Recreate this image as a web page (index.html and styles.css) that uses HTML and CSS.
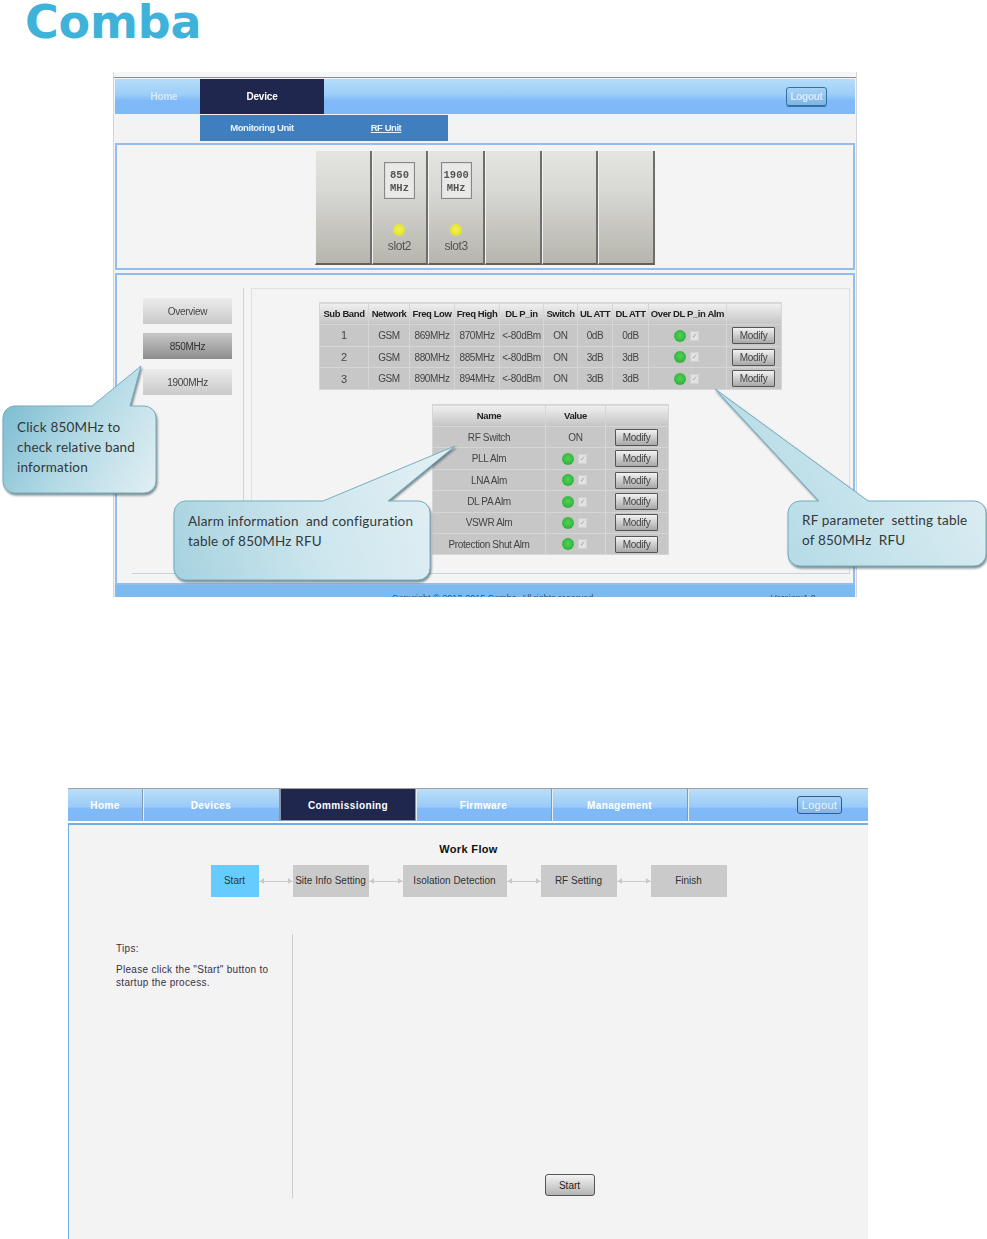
FILE: index.html
```html
<!DOCTYPE html>
<html lang="en">
  <head>
    <meta charset="utf-8" />
    <title>Comba commissioning guide</title>
    <link rel="stylesheet" href="styles.css">
  </head>
  <body>
    <header class="logo-row">
      <span class="logo">Comba</span>
    </header>

    <!-- figure 1: device page with callouts -->
    <section class="figure-one">
      <div class="screen">
        <div class="top-strip"></div>
        <nav class="nav">
          <a class="tab tab-home">Home</a>
          <a class="tab tab-device">Device</a>
          <button type="button" class="logout logout-one">Logout</button>
        </nav>
        <div class="subnav-row">
          <div class="subnav">
            <a>Monitoring Unit</a>
            <a class="current">RF Unit</a>
          </div>
        </div>

        <div class="panel panel-slots">
          <div class="slot"></div>
          <div class="slot">
            <div class="card-label">850<br>MHz</div>
            <i class="led led-yellow"></i>
            <span class="slot-name">slot2</span>
          </div>
          <div class="slot">
            <div class="card-label">1900<br>MHz</div>
            <i class="led led-yellow"></i>
            <span class="slot-name">slot3</span>
          </div>
          <div class="slot"></div>
          <div class="slot"></div>
          <div class="slot"></div>
        </div>

        <div class="panel panel-bands">
          <div class="band-layout">
            <div class="band-list">
              <a class="band">Overview</a>
              <a class="band band-active">850MHz</a>
              <a class="band">1900MHz</a>
            </div>
            <div class="band-content">
              <table class="grid rf-table">
                <colgroup><col><col><col><col><col><col><col><col><col><col></colgroup>
                <thead>
                  <tr><th>Sub Band</th><th>Network</th><th>Freq Low</th><th>Freq High</th><th>DL P_in</th><th>Switch</th><th>UL ATT</th><th>DL ATT</th><th>Over DL P_in Alm</th><th></th></tr>
                </thead>
                <tbody>
                  <tr><td class="big">1</td><td>GSM</td><td>869MHz</td><td>870MHz</td><td>&lt;-80dBm</td><td>ON</td><td>0dB</td><td>0dB</td><td><i class="led led-green"></i><i class="tick"></i></td><td><button type="button" class="modify">Modify</button></td></tr>
                  <tr><td class="big">2</td><td>GSM</td><td>880MHz</td><td>885MHz</td><td>&lt;-80dBm</td><td>ON</td><td>3dB</td><td>3dB</td><td><i class="led led-green"></i><i class="tick"></i></td><td><button type="button" class="modify">Modify</button></td></tr>
                  <tr><td class="big">3</td><td>GSM</td><td>890MHz</td><td>894MHz</td><td>&lt;-80dBm</td><td>ON</td><td>3dB</td><td>3dB</td><td><i class="led led-green"></i><i class="tick"></i></td><td><button type="button" class="modify">Modify</button></td></tr>
                </tbody>
              </table>

              <table class="grid alarm-table">
                <colgroup><col><col><col></colgroup>
                <thead>
                  <tr><th>Name</th><th>Value</th><th></th></tr>
                </thead>
                <tbody>
                  <tr><td>RF Switch</td><td>ON</td><td><button type="button" class="modify">Modify</button></td></tr>
                  <tr><td>PLL Alm</td><td><i class="led led-green"></i><i class="tick"></i></td><td><button type="button" class="modify">Modify</button></td></tr>
                  <tr><td>LNA Alm</td><td><i class="led led-green"></i><i class="tick"></i></td><td><button type="button" class="modify">Modify</button></td></tr>
                  <tr><td>DL PA Alm</td><td><i class="led led-green"></i><i class="tick"></i></td><td><button type="button" class="modify">Modify</button></td></tr>
                  <tr><td>VSWR Alm</td><td><i class="led led-green"></i><i class="tick"></i></td><td><button type="button" class="modify">Modify</button></td></tr>
                  <tr><td>Protection Shut Alm</td><td><i class="led led-green"></i><i class="tick"></i></td><td><button type="button" class="modify">Modify</button></td></tr>
                </tbody>
              </table>
            </div>
          </div>
        </div>

        <footer class="screen-footer">
          <span class="copyright">Copyright © 2013-2015 Comba. All rights reserved.</span>
          <span class="version">Version:1.0</span>
        </footer>
      </div>

      <!-- callouts sit over the screenshot -->
      <div class="callout callout-band">
        <svg width="155" height="130" viewBox="0 0 155 130">
          <defs>
            <linearGradient id="fillBand" gradientUnits="userSpaceOnUse" x1="0" y1="41" x2="154" y2="128">
              <stop offset="0" stop-color="#7dbdd1" />
              <stop offset="0.5" stop-color="#b6dbe6" />
              <stop offset="1" stop-color="#e2eff4" />
            </linearGradient>
          </defs>
          <path fill="url(#fillBand)" stroke="#74aebf" d="M12 41H90L139 1L128 41H142A12 12 0 0 1 154 53V116A12 12 0 0 1 142 128H12A12 12 0 0 1 1 116V53A12 12 0 0 1 12 41Z" />
        </svg>
        <p>Click 850MHz to<br>check relative band<br>information</p>
      </div>

      <div class="callout callout-alarm">
        <svg width="283" height="137" viewBox="0 0 283 137">
          <defs>
            <linearGradient id="fillAlarm" gradientUnits="userSpaceOnUse" x1="0" y1="135" x2="257" y2="56">
              <stop offset="0" stop-color="#a5d2df" />
              <stop offset="0.55" stop-color="#cde6ee" />
              <stop offset="1" stop-color="#dfeef3" />
            </linearGradient>
          </defs>
          <path fill="url(#fillAlarm)" stroke="#74aebf" d="M12 56H150L282 1L215 56H245A12 12 0 0 1 257 68V123A12 12 0 0 1 245 135H12A12 12 0 0 1 1 123V68A12 12 0 0 1 12 56Z" />
        </svg>
        <p>Alarm information&nbsp; and configuration<br>table of 850MHz RFU</p>
      </div>

      <div class="callout callout-rf">
        <svg width="274" height="180" viewBox="0 0 274 180">
          <defs>
            <linearGradient id="fillRf" gradientUnits="userSpaceOnUse" x1="74" y1="178" x2="272" y2="60">
              <stop offset="0" stop-color="#b5dbe6" />
              <stop offset="1" stop-color="#e0eff4" />
            </linearGradient>
          </defs>
          <path fill="url(#fillRf)" stroke="#74aebf" d="M86 113H105L1 1L154 113H260A12 12 0 0 1 272 125V166A12 12 0 0 1 260 178H86A12 12 0 0 1 74 166V125A12 12 0 0 1 86 113Z" />
        </svg>
        <p>RF parameter&nbsp; setting table<br>of 850MHz&nbsp; RFU</p>
      </div>
    </section>

    <!-- figure 2: commissioning work flow -->
    <section class="figure-two">
      <nav class="nav nav-wide">
        <a class="tab tab-w75">Home</a>
        <a class="tab tab-w137">Devices</a>
        <a class="tab tab-w136 tab-on">Commissioning</a>
        <a class="tab tab-w136">Firmware</a>
        <a class="tab tab-w136">Management</a>
        <button type="button" class="logout logout-two">Logout</button>
      </nav>
      <div class="flow-page">
        <h2 class="flow-title">Work Flow</h2>
        <div class="flow">
          <div class="step step-start">Start</div>
          <i class="link"></i>
          <div class="step step-mid">Site Info Setting</div>
          <i class="link"></i>
          <div class="step step-wide">Isolation Detection</div>
          <i class="link"></i>
          <div class="step step-mid">RF Setting</div>
          <i class="link"></i>
          <div class="step step-mid">Finish</div>
        </div>
        <div class="flow-body">
          <aside class="tips">
            <p>Tips:</p>
            <p>Please click the "Start" button to<br>startup the process.</p>
          </aside>
          <div class="flow-action">
            <button type="button" class="start-btn">Start</button>
          </div>
        </div>
      </div>
    </section>
  </body>
</html>
```

FILE: styles.css
```css
body {
  margin: 0;
  height: 1239px;
  overflow: hidden;
  background: #fff;
  font-family: "Liberation Sans", Arial, sans-serif;
  color: #333;
}

.logo-row {
  height: 72px;
  padding-left: 25px;
  box-sizing: border-box;
}

.logo {
  display: block;
  width: 180px;
  font-family: "DejaVu Sans", sans-serif;
  font-size: 46px;
  font-weight: bold;
  line-height: 44px;
  letter-spacing: -0.2px;
  color: #3fb2da;
}

/* figure 1 */
.figure-one {
  position: relative;
  width: 744px;
  height: 525px;
  margin-left: 113px;
}

.screen {
  height: 525px;
  overflow: hidden;
  box-sizing: border-box;
  padding: 0 1px;
  background: #f3f3f3;
  border-left: 1px solid #d5d5d5;
  border-right: 1px solid #d5d5d5;
  filter: blur(0.45px);
}

.top-strip {
  height: 5px;
  margin: 0 -1px 1px;
  background: #f4f6f8;
  border-bottom: 1px solid #8d8d8d;
}

.nav {
  display: flex;
  align-items: stretch;
  height: 35px;
  background: linear-gradient(#b6dcf9, #9ccdf8 45%, #7fb9f8 62%, #7fb9f8);
}

.tab {
  display: flex;
  align-items: center;
  justify-content: center;
  box-sizing: border-box;
  font-size: 10px;
  font-weight: bold;
  letter-spacing: -0.2px;
  color: #fff;
}

.tab-home {
  width: 85px;
  padding-left: 13px;
  color: #d8e9fb;
}

.tab-device {
  width: 124px;
  background: #1f274f;
}

.logout {
  margin-left: auto;
  padding: 0;
  font-family: inherit;
  color: #eaf4fd;
  border-radius: 3px;
}

.logout-one {
  align-self: center;
  width: 41px;
  height: 19px;
  margin-right: 28px;
  font-size: 10px;
  font-weight: bold;
  letter-spacing: -0.3px;
  color: #d8eafb;
  background: linear-gradient(#a9d3f6, #7db3e6);
  border: 1px solid #35719f;
  box-shadow: 0 1px 0 #35719f;
}

.subnav-row {
  height: 29px;
  padding-top: 1px;
  box-sizing: border-box;
}

.subnav {
  display: flex;
  width: 248px;
  height: 26px;
  margin-left: 85px;
  background: #3f7fc0;
}

.subnav a {
  flex: 1;
  font-size: 9.5px;
  font-weight: bold;
  line-height: 26px;
  letter-spacing: -0.45px;
  text-align: center;
  color: #eaf2fa;
}

.subnav .current {
  text-decoration: underline;
}

.panel {
  box-sizing: border-box;
  background: #f4f4f4;
  border: 2px solid #93bdec;
}

.panel-slots {
  display: flex;
  height: 127px;
  padding: 6px 0 0 198px;
}

.slot {
  display: flex;
  flex-direction: column;
  align-items: center;
  box-sizing: border-box;
  width: 56.67px;
  height: 114px;
  padding-top: 11px;
  background: linear-gradient(#e4e4e1, #d8d8d5 35%, #b6b5ad);
  border-left: 1px solid #f2f2f2;
  border-right: 2px solid #6e6e6a;
  border-bottom: 2px solid #5f5f5b;
}

.card-label {
  box-sizing: border-box;
  width: 31px;
  height: 37px;
  padding-top: 6px;
  font-family: "Liberation Mono", monospace;
  font-size: 10.5px;
  font-weight: bold;
  line-height: 13px;
  text-align: center;
  color: #555;
  background: #e9e9e7;
  border: 1px solid #888;
  box-shadow: 0 0 0 1px #ddd inset;
}

.led {
  display: inline-block;
  width: 12px;
  height: 12px;
  border-radius: 50%;
  vertical-align: middle;
}

.led-yellow {
  margin-top: 25px;
  background: radial-gradient(circle at 50% 45%, #f2f25a, #dcdc14);
}

.led-green {
  background: radial-gradient(circle at 50% 45%, #52d05a, #22a82e);
}

.slot-name {
  margin-top: 3px;
  font-size: 12px;
  letter-spacing: -0.4px;
  color: #555;
}

.tick {
  display: inline-flex;
  align-items: center;
  justify-content: center;
  box-sizing: border-box;
  width: 9px;
  height: 10px;
  margin: 0 2px 0 4px;
  vertical-align: middle;
  background: #e2e2e2;
  border: 1px solid #d2d2d2;
}

.tick::after {
  content: "✓";
  font-family: "DejaVu Sans", sans-serif;
  font-size: 7px;
  line-height: 8px;
  color: #a8a8a8;
}

.panel-bands {
  height: 312px;
  margin-top: 3px;
  padding-top: 13px;
}

.band-layout {
  display: flex;
  height: 285px;
  margin: 0 3px 0 15px;
  border-bottom: 1px solid #c6d2dd;
}

.band-list {
  display: flex;
  flex-direction: column;
  gap: 9px;
  width: 112px;
  box-sizing: border-box;
  padding: 10px 0 0 11px;
  border-right: 1px solid #c5d6e8;
}

.band {
  width: 89px;
  height: 26px;
  font-size: 10px;
  line-height: 27px;
  letter-spacing: -0.3px;
  text-align: center;
  color: #444;
  background: linear-gradient(#ececec, #c9c9c9);
}

.band-active {
  margin-bottom: 1px;
  background: linear-gradient(#c8c8c8, #8d8d8d);
  color: #333;
}

.band-content {
  flex: 1;
  margin-left: 7px;
  padding-top: 13px;
  border: 1px solid #e0e0e0;
  border-bottom: 0;
}

.grid {
  table-layout: fixed;
  border-collapse: collapse;
  background: #c7c7c7;
  font-size: 10px;
  text-align: center;
  color: #444;
  border: 1px solid #d2d2d2;
}

.grid th {
  height: 22px;
  padding: 0;
  box-sizing: border-box;
  font-size: 9.5px;
  color: #222;
  white-space: nowrap;
  letter-spacing: -0.4px;
  background: linear-gradient(#f0f0f0, #c4c4c4);
  border: 1px solid #d6d6d6;
}

.grid td {
  height: 20.7px;
  padding: 0;
  white-space: nowrap;
  letter-spacing: -0.35px;
  border: 1px solid #d6d6d6;
}

.grid .big {
  font-size: 11px;
}

.rf-table {
  width: 462px;
  margin-left: 67px;
}

.rf-table col:nth-child(1) { width: 49px; }
.rf-table col:nth-child(2) { width: 41px; }
.rf-table col:nth-child(3) { width: 45px; }
.rf-table col:nth-child(4) { width: 45px; }
.rf-table col:nth-child(5) { width: 44px; }
.rf-table col:nth-child(6) { width: 34px; }
.rf-table col:nth-child(7) { width: 35px; }
.rf-table col:nth-child(8) { width: 36px; }
.rf-table col:nth-child(9) { width: 78px; }
.rf-table col:nth-child(10) { width: 55px; }

.alarm-table {
  width: 236px;
  margin: 14px 0 0 180px;
}

.alarm-table th {
  padding-bottom: 1px;
}

.alarm-table td {
  height: 20.4px;
}

.alarm-table col:nth-child(1) { width: 113px; }
.alarm-table col:nth-child(2) { width: 60px; }
.alarm-table col:nth-child(3) { width: 63px; }

.modify {
  display: block;
  box-sizing: border-box;
  width: 43px;
  height: 17px;
  padding: 0;
  font-family: inherit;
  font-size: 10px;
  letter-spacing: -0.3px;
  color: #444;
  background: linear-gradient(#f2f2f2, #a8a8a8);
  border: 1px solid #555;
  border-radius: 1px;
}

.rf-table .modify {
  margin-left: 5px;
}

.alarm-table .modify {
  margin-left: 9px;
}

.screen-footer {
  display: flex;
  height: 12px;
  overflow: hidden;
  background: #7cb9ee;
  font-size: 9px;
  line-height: 12px;
  color: #35506a;
}

.copyright {
  margin: 7px 0 0 277px;
}

.version {
  margin: 7px 0 0 175px;
}

.callout {
  position: absolute;
}

.callout svg {
  position: absolute;
  left: 0;
  top: 0;
  overflow: visible;
  filter: drop-shadow(1px 2px 1px rgba(55, 80, 90, 0.65));
}

.callout p {
  position: relative;
  margin: 0;
  font-family: Lato, sans-serif;
  font-size: 13.5px;
  line-height: 20px;
  letter-spacing: 0.2px;
  color: #33383a;
  white-space: nowrap;
}

.callout-band {
  left: -111px;
  top: 293px;
  width: 155px;
  height: 130px;
}

.callout-band p {
  padding: 52px 0 0 15px;
}

.callout-alarm {
  left: 60px;
  top: 373px;
  width: 283px;
  height: 137px;
}

.callout-alarm p {
  padding: 66px 0 0 15px;
}

.callout-rf {
  left: 601px;
  top: 316px;
  width: 274px;
  height: 180px;
}

.callout-rf p {
  padding: 122px 0 0 88px;
}

/* figure 2 */
.figure-two {
  width: 800px;
  height: 451px;
  margin: 191px 0 0 68px;
  border-top: 1px solid #a2a2a2;
  box-sizing: border-box;
}

.nav-wide {
  height: 32px;
  background: linear-gradient(#b9def9, #9bcbf8 55%, #7fb9f8 62%, #7fb9f8);
}

.nav-wide .tab {
  font-size: 10px;
  letter-spacing: 0.4px;
  border-right: 1px solid #8199b3;
  box-shadow: 1px 0 0 #e6eef6;
}

.tab-w75 { width: 75px; }
.tab-w137 { width: 137px; }
.tab-w136 { width: 136px; }

.nav-wide .tab-on {
  padding-top: 1px;
  background: #1f274f;
  border: 1px solid #8e93a6;
  border-top: 0;
}

.logout-two {
  align-self: center;
  width: 45px;
  height: 18px;
  margin-right: 26px;
  font-size: 11px;
  letter-spacing: 0.3px;
  background: linear-gradient(#a5d2f8, #7fb4ec);
  border: 1px solid #3a5a80;
}

.flow-page {
  box-sizing: border-box;
  height: 418px;
  margin-top: 2px;
  background: #f3f3f3;
  border-top: 2px solid #6cb0ea;
  border-left: 1px solid #6cb0ea;
}

.flow-title {
  margin: 0;
  padding-top: 18px;
  font-size: 11px;
  line-height: 13px;
  letter-spacing: 0.35px;
  text-align: center;
  color: #111;
}

.flow {
  display: flex;
  justify-content: center;
  height: 32px;
  margin-top: 9px;
}

.step {
  font-size: 10px;
  line-height: 32px;
  text-align: center;
  color: #333;
  background: #cacaca;
}

.step-start {
  width: 48px;
  background: #66ccff;
}

.step-mid {
  width: 76px;
}

.step-wide {
  width: 104px;
}

.link {
  display: flex;
  align-items: center;
  justify-content: space-between;
  width: 34px;
  padding: 0 1px;
  box-sizing: border-box;
  background: linear-gradient(#cccccc, #cccccc) center / 100% 1px no-repeat;
}

.link::before,
.link::after {
  content: "";
  border: 3px solid transparent;
}

.link::before {
  border-left: 0;
  border-right: 4px solid #c8c8c8;
}

.link::after {
  border-right: 0;
  border-left: 4px solid #c8c8c8;
}

.flow-body {
  display: flex;
  height: 264px;
  margin-top: 37px;
}

.tips {
  box-sizing: border-box;
  width: 224px;
  padding: 8px 0 0 47px;
  font-size: 10px;
  line-height: 13px;
  letter-spacing: 0.3px;
  color: #3a3048;
  border-right: 1px solid #ccc;
}

.tips p {
  margin: 0 0 8px;
}

.flow-action {
  flex: 1;
  display: flex;
  align-items: flex-end;
  justify-content: center;
  padding: 0 22px 2px 0;
}

.start-btn {
  width: 50px;
  height: 22px;
  padding: 0;
  font-family: inherit;
  font-size: 10px;
  color: #222;
  background: linear-gradient(#f4f4f4, #b4b4b4);
  border: 1px solid #555;
  border-radius: 3px;
}
```
